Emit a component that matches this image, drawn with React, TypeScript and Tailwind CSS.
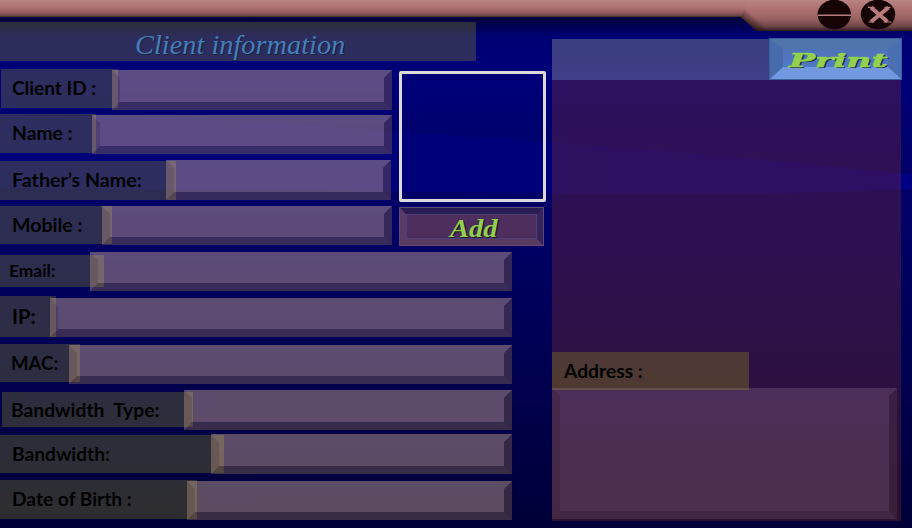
import { useLayoutEffect, useRef } from "react";

type FitProps = { text: string; width: number; className: string };

/* A single line of text stretched or condensed to an exact width. */
function FitText({ text, width, className }: FitProps) {
  const ref = useRef<HTMLSpanElement>(null);
  useLayoutEffect(() => {
    const el = ref.current;
    if (!el) return;
    const fit = () => {
      el.style.transform = `scaleX(${width / el.offsetWidth})`;
    };
    fit();
    document.fonts?.ready.then(fit);
  }, [width]);
  return (
    <span ref={ref} className={`inline-block origin-left whitespace-pre ${className}`}>
      {text}
    </span>
  );
}

type Field = {
  text: string;
  width: number;
  row: string;
  label: string;
  font: string;
  input: string;
};

const big = "text-[19px]";

const topFields: Field[] = [
  { text: "Client ID :", width: 84, row: "h-[45px]", label: "ml-px h-[39px] w-[117px] pl-[11px] pb-[2px]", font: big, input: "-ml-[6px] mt-px h-[40px] w-[280px]" },
  { text: "Name :", width: 61, row: "h-[46px]", label: "h-[39px] w-[96px] pl-[12px] pb-[2px]", font: big, input: "-ml-[4px] mt-px h-[39px] w-[300px]" },
  { text: "Father’s Name:", width: 130, row: "h-[46px]", label: "mt-px h-[39px] w-[176px] pl-[12px] pb-[2px]", font: big, input: "-ml-[10px] h-[40px] w-[225px]" },
  { text: "Mobile :", width: 71, row: "h-[46px]", label: "h-[38px] w-[112px] pl-[12px] pb-[2px]", font: big, input: "-ml-[10px] h-[39px] w-[290px]" },
];

const lowFields: Field[] = [
  { text: "Email:", width: 46, row: "h-[44px]", label: "mt-[3px] h-[32px] w-[104px] pl-[9px] pb-px", font: "text-[17px]", input: "-ml-[14px] h-[39px] w-[422px]" },
  { text: "IP:", width: 24, row: "h-[48px]", label: "h-[41px] w-[56px] pl-[12px] pb-[2px]", font: "text-[21px]", input: "-ml-[6px] mt-[2px] h-[39px] w-[462px]" },
  { text: "MAC:", width: 47, row: "h-[46px]", label: "h-[38px] w-[80px] pl-[11px] pb-px", font: big, input: "-ml-[11px] mt-px h-[39px] w-[443px]" },
  { text: "Bandwidth  Type:", width: 148, row: "h-[44px]", label: "ml-[2px] mt-[2px] h-[35px] w-[191px] pl-[9px]", font: big, input: "-ml-[9px] h-[40px] w-[328px]" },
  { text: "Bandwidth:", width: 98, row: "h-[46px]", label: "mt-px h-[38px] w-[224px] pl-[12px] pb-[2px]", font: big, input: "-ml-[13px] h-[40px] w-[301px]" },
  { text: "Date of Birth :", width: 120, row: "h-[40px]", label: "h-[39px] w-[197px] pl-[12px] pb-[2px]", font: big, input: "-ml-[10px] mt-px h-[39px] w-[325px]" },
];

function FieldRow({ field }: { field: Field }) {
  return (
    <div className={`flex items-start ${field.row}`}>
      <label className={`flex shrink-0 items-center bg-[rgba(180,180,22,0.25)] ${field.label}`}>
        <FitText
          text={field.text}
          width={field.width}
          className={`font-[Lato,'Open_Sans',sans-serif] font-bold leading-none text-black ${field.font}`}
        />
      </label>
      <input
        aria-label={field.text}
        className={`relative shrink-0 border-8 border-t-[rgba(219,181,152,0.42)] border-r-[rgba(124,93,75,0.42)] border-b-[rgba(133,105,82,0.42)] border-l-[rgba(185,148,126,0.42)] bg-[rgba(219,179,150,0.42)] bg-clip-padding outline-none ${field.input}`}
      />
    </div>
  );
}

function Backdrop() {
  return (
    <svg className="absolute inset-0" width="912" height="528" viewBox="0 0 912 528" aria-hidden="true">
      <defs>
        <linearGradient id="sky" x1="0" y1="0" x2="0" y2="1">
          <stop offset="0" stopColor="#000030" />
          <stop offset="0.035" stopColor="#00003c" />
          <stop offset="0.07" stopColor="#000074" />
          <stop offset="0.16" stopColor="#000078" />
          <stop offset="0.3" stopColor="#00006a" />
          <stop offset="0.45" stopColor="#000064" />
          <stop offset="0.65" stopColor="#000054" />
          <stop offset="1" stopColor="#000038" />
        </linearGradient>
        <linearGradient id="wave" x1="0" y1="0" x2="1" y2="0">
          <stop offset="0" stopColor="#000078" />
          <stop offset="0.95" stopColor="#00007a" />
          <stop offset="1" stopColor="#000086" />
        </linearGradient>
      </defs>
      <rect width="912" height="528" fill="url(#sky)" />
      <path d="M0 114 Q240 118 400 132 Q700 151 912 175 L912 189 Q760 196 552 193 L0 188 Z" fill="url(#wave)" />
    </svg>
  );
}

function TitleBar() {
  return (
    <header className="h-[22px]">
      <svg className="block overflow-visible" width="912" height="32" viewBox="0 0 912 32">
        <defs>
          <linearGradient id="barL" x1="0" y1="0" x2="0" y2="17" gradientUnits="userSpaceOnUse">
            <stop offset="0" stopColor="#b88484" />
            <stop offset="0.45" stopColor="#ae7070" />
            <stop offset="0.75" stopColor="#915b5b" />
            <stop offset="0.93" stopColor="#684444" />
            <stop offset="1" stopColor="#38201c" />
          </linearGradient>
          <linearGradient id="barR" x1="0" y1="0" x2="0" y2="31" gradientUnits="userSpaceOnUse">
            <stop offset="0" stopColor="#b88484" />
            <stop offset="0.3" stopColor="#ae7070" />
            <stop offset="0.6" stopColor="#9a6262" />
            <stop offset="0.85" stopColor="#6e4646" />
            <stop offset="1" stopColor="#301c20" />
          </linearGradient>
          <linearGradient id="slope" x1="749" y1="24" x2="755" y2="17" gradientUnits="userSpaceOnUse">
            <stop offset="0" stopColor="#241212" stopOpacity="0.65" />
            <stop offset="1" stopColor="#241212" stopOpacity="0" />
          </linearGradient>
        </defs>
        <path d="M741 0H912V31H757L741 17Z" fill="url(#barR)" />
        <path d="M741 0H800V31H757L741 17Z" fill="url(#slope)" />
        <path d="M0 0H748L741 17H0Z" fill="url(#barL)" />
        <ellipse cx="834.3" cy="14.5" rx="16.7" ry="14.8" fill="#160404" />
        <path d="M818 15.3H851" stroke="#b87c7c" strokeWidth="1.5" />
        <ellipse cx="878" cy="14.5" rx="17.2" ry="14.8" fill="#160404" />
        <path d="M871 7.5L887.5 21.8M888.5 7.5L871 21.8" stroke="#b87c7c" strokeWidth="4" />
        <path d="M868 7.3H874.5M884.5 7.3H890.5M868.5 22H874M883.5 22H891.5" stroke="#b87c7c" strokeWidth="1.2" />
      </svg>
    </header>
  );
}

export default function App() {
  return (
    <div className="relative h-[528px] w-[912px] overflow-hidden bg-[#00003c]">
      <Backdrop />
      <div className="relative">
        <TitleBar />
        <main className="flex items-start">
          <section className="w-[552px] shrink-0">
            <h1 className="mb-2 h-[39px] w-[476px] bg-[rgba(180,180,22,0.25)] pl-[135px] pt-[8px]">
              <FitText
                text="Client information"
                width={210}
                className="font-['Liberation_Serif',serif] text-[27px] italic leading-[30px] text-[#447fb8] [text-shadow:1px_1px_0_#1c2040]"
              />
            </h1>
            <div className="flex">
              <div className="w-[399px] shrink-0">
                {topFields.map((f) => (
                  <FieldRow key={f.text} field={f} />
                ))}
              </div>
              <div className="pt-[2px]">
                <div className="h-[131px] w-[147px] rounded-[2px] border-3 border-[#dcdade]" />
                <button className="mt-[5px] block h-[39px] w-[145px] border border-[#5d4878]">
                  <span className="block h-[37px] border-[6px] border-t-[#291c52] border-r-[#35235a] border-b-[#5b3a60] border-l-[#5a3b66]">
                    <span className="block h-[25px] border border-[#4a407e] bg-[#4e2e5c] pl-[43px] text-left">
                      <FitText
                        text="Add"
                        width={48}
                        className="font-['Liberation_Serif',serif] text-[25px] font-bold italic leading-[27px] text-[#92d050] [text-shadow:1px_1px_0_#201818]"
                      />
                    </span>
                  </span>
                </button>
              </div>
            </div>
            {lowFields.map((f) => (
              <FieldRow key={f.text} field={f} />
            ))}
          </section>
          <aside className="mt-[17px] h-[482px] w-[349px] shrink-0 bg-[rgba(180,64,24,0.25)]">
            <div className="flex h-[41px] justify-end bg-linear-to-b from-[#3b3d80] to-[#3e3f88]">
              <button className="-mr-px -mt-px h-[42px] w-[133px] shrink-0 border border-[#37609c]">
                <span className="block h-[40px] border-t-[10px] border-r-[13px] border-b-[12px] border-l-[13px] border-t-[#5074ac] border-r-[#4a70b2] border-b-[#7299e0] border-l-[#466cac] bg-linear-to-b from-[#4f73b6] to-[#5079c8] pl-[6px] text-left">
                  <FitText
                    text="Print"
                    width={98}
                    className="font-['DejaVu_Serif',serif] text-[18px] font-bold italic leading-[24px] text-[#92d050] [-webkit-text-stroke:0.6px_#92d050] [text-shadow:1px_1px_0_#1c3038]"
                  />
                </span>
              </button>
            </div>
            <div className="mt-[272px] flex h-[38px] w-[197px] items-center bg-[rgba(180,180,12,0.25)] pb-px pl-[12px]">
              <FitText
                text="Address :"
                width={79}
                className="font-[Lato,'Open_Sans',sans-serif] text-[19px] font-bold leading-none text-black"
              />
            </div>
            <textarea
              aria-label="Address"
              className="-mt-[2px] block h-[131px] w-[345px] resize-none border-8 border-t-[rgba(200,170,190,0.2)] border-r-[rgba(110,90,90,0.2)] border-b-[rgba(150,130,135,0.2)] border-l-[rgba(160,135,135,0.2)] bg-[rgba(200,170,190,0.2)] bg-clip-padding outline-none"
            />
          </aside>
        </main>
      </div>
    </div>
  );
}
